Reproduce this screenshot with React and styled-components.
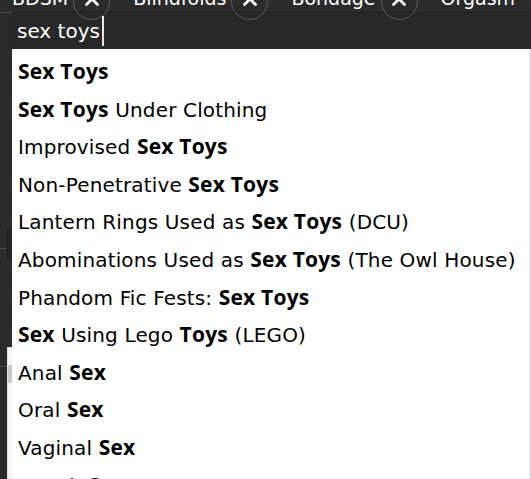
import React from "react"
import styled, { createGlobalStyle } from "styled-components"

const Global = createGlobalStyle`
  html, body {
    margin: 0;
    padding: 0;
    background: #2b2b2b;
    overflow: hidden;
  }
  body {
    font-family: "DejaVu Sans", "Liberation Sans", sans-serif;
  }
`

const Page = styled.div`
  display: flex;
  width: 531px;
  height: 479px;
  overflow: hidden;
  background: #2b2b2b;
`

const Gutter = styled.div`
  width: 12px;
  flex: none;
  display: flex;
  flex-direction: column;
`

const Rule = styled.div`
  margin-top: ${p => p.top}px;
  height: 1px;
  background: #4a4a4a;
`

const Stub = styled.div`
  position: relative;
  margin-top: ${p => p.top}px;
  margin-left: 7px;
  width: 5px;
  height: ${p => p.h}px;
  box-sizing: border-box;
  background: ${p => (p.light ? "#f4f4f4" : "#262626")};
  border: 1px solid ${p => (p.light ? "#e0e0e0" : "#1b1b1b")};
  border-right: none;
  &::before {
    content: "";
    position: absolute;
    left: -8px;
    top: ${p => p.line}px;
    width: 7px;
    height: 1px;
    background: #4a4a4a;
  }
  &::after {
    content: "";
    display: ${p => (p.light ? "block" : "none")};
    position: absolute;
    left: 0;
    top: 17px;
    width: 4px;
    height: 18px;
    background: #c8c8c8;
  }
`

const Field = styled.div`
  width: 519px;
  flex: none;
`

const TagRow = styled.div`
  position: relative;
  z-index: 1;
  display: flex;
  height: 12px;
  border-bottom: 1px solid #1e1e1e;
`

const Tag = styled.div`
  display: flex;
  align-items: center;
  height: 37px;
  margin-top: -17px;
  margin-right: ${p => p.gap}px;
  color: #fff;
  font-size: 19px;
  white-space: nowrap;
  span {
    position: relative;
    top: -4px;
  }
`

const Remove = styled.div`
  display: flex;
  align-items: center;
  justify-content: center;
  width: 37px;
  height: 37px;
  margin-left: 5px;
  border-radius: 50%;
  border: 1px solid rgba(255, 255, 255, 0.22);
  box-sizing: border-box;
  svg {
    position: relative;
    top: -3px;
  }
`

const Input = styled.div`
  height: 36px;
  background: #282828;
  display: flex;
  align-items: center;
  padding-left: 5px;
  color: #fff;
  font-size: 20px;
`

const Caret = styled.span`
  display: inline-block;
  width: 2px;
  height: 30px;
  background: #e8e8e8;
  margin-left: 2px;
`

const Dropdown = styled.ul`
  list-style: none;
  margin: 0;
  padding: 4px 0 0;
  background: #fff;
  border-right: 2px solid #e4e4e4;
  box-sizing: border-box;
  width: 519px;
`

const Item = styled.li`
  height: 37.6px;
  line-height: 37.6px;
  padding-left: 6px;
  color: #000;
  font-size: 20px;
  letter-spacing: 0.15px;
  white-space: nowrap;
  b {
    font-family: "Open Sans", "DejaVu Sans", sans-serif;
    font-size: 21px;
    font-weight: 700;
    letter-spacing: 0.2px;
    color: #000;
  }
`

const Cross = () => (
  <svg width="16" height="16" viewBox="0 0 16 16">
    <path d="M2.5 2.5 L13.5 13.5 M13.5 2.5 L2.5 13.5" stroke="#fff" strokeWidth="2.8" strokeLinecap="round" />
  </svg>
)

const tags = [
  ["BDSM", 23],
  ["Blindfolds", 23],
  ["Bondage", 23],
  ["Orgasm", 0],
]

const items = [
  [["b", "Sex Toys"]],
  [["b", "Sex Toys"], ["t", " Under Clothing"]],
  [["t", "Improvised "], ["b", "Sex Toys"]],
  [["t", "Non-Penetrative "], ["b", "Sex Toys"]],
  [["t", "Lantern Rings Used as "], ["b", "Sex Toys"], ["t", " (DCU)"]],
  [["t", "Abominations Used as "], ["b", "Sex Toys"], ["t", " (The Owl House)"]],
  [["t", "Phandom Fic Fests: "], ["b", "Sex Toys"]],
  [["b", "Sex"], ["t", " Using Lego "], ["b", "Toys"], ["t", " (LEGO)"]],
  [["t", "Anal "], ["b", "Sex"]],
  [["t", "Oral "], ["b", "Sex"]],
  [["t", "Vaginal "], ["b", "Sex"]],
  [["t", "Rough "], ["b", "Sex"]],
]

const App = () => {
  return (
    <>
      <Global />
      <Page>
        <Gutter>
          <Rule top={12} />
          <Stub top={215} h={38} line={19} />
          <Stub top={87} h={160} line={18} light />
        </Gutter>
        <Field>
          <TagRow>
            {tags.map(([name, gap]) => (
              <Tag key={name} gap={gap}>
                <span>{name}</span>
                {gap > 0 && (
                  <Remove>
                    <Cross />
                  </Remove>
                )}
              </Tag>
            ))}
          </TagRow>
          <Input>
            sex toys
            <Caret />
          </Input>
          <Dropdown>
            {items.map((parts, i) => (
              <Item key={i}>
                {parts.map(([k, s], j) => (k === "b" ? <b key={j}>{s}</b> : <span key={j}>{s}</span>))}
              </Item>
            ))}
          </Dropdown>
        </Field>
      </Page>
    </>
  )
}

export default App
